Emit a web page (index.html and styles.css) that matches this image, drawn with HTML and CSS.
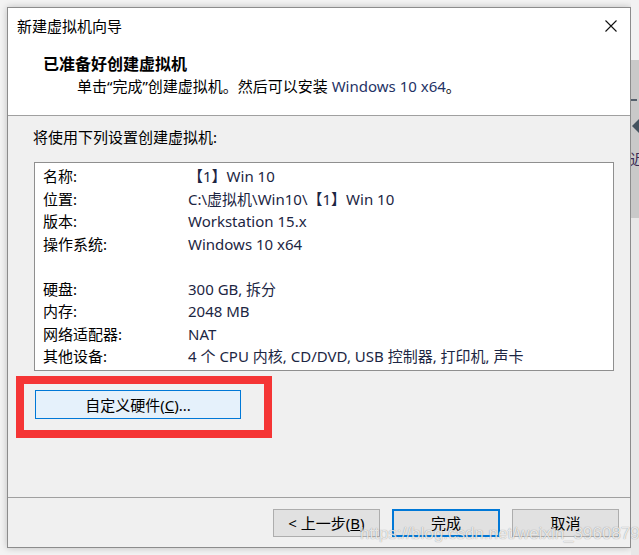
FILE: index.html
```html
<!DOCTYPE html>
<html lang="zh-CN">
<head>
<meta charset="utf-8">
<title>新建虚拟机向导</title>
<link rel="stylesheet" href="styles.css">
</head>
<body>
<div class="screen">
  <div class="window">
    <div class="top">
      <div class="titlebar">
        <span class="title">新建虚拟机向导</span>
        <svg class="close" width="12" height="12" viewBox="0 0 12 12"><path d="M0.5 0.5 L11.5 11.5 M11.5 0.5 L0.5 11.5" stroke="#111" stroke-width="1.1" fill="none"/></svg>
      </div>
      <div class="header">
        <div class="heading">已准备好创建虚拟机</div>
        <div class="subtitle">单击“完成”创建虚拟机。然后可以安装 <span class="latin">Windows 10 x64</span>。</div>
      </div>
    </div>
    <div class="content">
      <div class="intro">将使用下列设置创建虚拟机:</div>
      <div class="summary">
        <div class="row"><span class="label">名称:</span><span class="value">【1】Win 10</span></div>
        <div class="row"><span class="label">位置:</span><span class="value">C:\虚拟机\Win10\【1】Win 10</span></div>
        <div class="row"><span class="label">版本:</span><span class="value">Workstation 15.x</span></div>
        <div class="row"><span class="label">操作系统:</span><span class="value">Windows 10 x64</span></div>
        <div class="row"></div>
        <div class="row"><span class="label">硬盘:</span><span class="value">300 GB, 拆分</span></div>
        <div class="row"><span class="label">内存:</span><span class="value">2048 MB</span></div>
        <div class="row"><span class="label">网络适配器:</span><span class="value">NAT</span></div>
        <div class="row"><span class="label">其他设备:</span><span class="value">4 个 CPU 内核, CD/DVD, USB 控制器, 打印机, 声卡</span></div>
      </div>
      <div class="custom-wrap">
        <button class="custom">自定义硬件(<u>C</u>)...</button>
        <span class="annot"></span>
      </div>
    </div>
    <div class="footer">
      <button class="btn">&lt; 上一步(<u>B</u>)</button>
      <button class="btn primary">完成</button>
      <button class="btn">取消</button>
    </div>
  </div>
  <div class="desk-strip">
    <div class="desk-light"></div>
    <div class="desk-gray">
      <span class="dash"></span>
      <span class="arrow"></span>
      <span class="glyph">近</span>
    </div>
    <div class="desk-rest"></div>
  </div>
  <div class="watermark">https://blog.csdn.net/weixin_39608791</div>
</div>
</body>
</html>
```
FILE: styles.css
```css
* { box-sizing: border-box; }
html, body {
  margin: 0;
  padding: 0;
  width: 639px;
  height: 555px;
  overflow: hidden;
  background: #f3f3f3;
  font-family: "Noto Sans", "Noto Sans CJK SC", sans-serif;
  font-size: 15px;
  color: #000;
}
.screen {
  position: relative;
  display: flex;
  width: 639px;
  height: 555px;
}
.window {
  margin: 7px 0 0 7px;
  width: 624px;
  height: 541px;
  border: 1px solid #8c8c8c;
  background: #f0f0f0;
  box-shadow: 0 0 7px rgba(0,0,0,0.22);
  display: flex;
  flex-direction: column;
  flex-shrink: 0;
}
.top {
  background: #fff;
  height: 108px;
  border-bottom: 1px solid #a0a0a0;
}
.titlebar {
  height: 35px;
  display: flex;
  align-items: center;
  justify-content: space-between;
  padding: 0 13px 0 9px;
}
.title { line-height: 20px; }
.close { display: block; margin-top: 0; }
.header { padding: 10px 0 0 35px; }
.heading {
  font-weight: bold;
  font-size: 16px;
  line-height: 22px;
}
.subtitle {
  padding-left: 34px;
  line-height: 23px;
}
.latin { color: #1f3366; }
.content {
  flex: 1;
  padding: 10px 0 0 25px;
}
.intro { line-height: 22px; }
.summary {
  margin: 14px 0 0 1px;
  width: 580px;
  height: 209px;
  border: 1px solid #8f8f8f;
  background: #fff;
  padding: 2px 0 0 8px;
}
.row {
  display: flex;
  height: 22.5px;
  line-height: 22.5px;
  white-space: nowrap;
}
.label { width: 145px; flex-shrink: 0; }
.value { color: #1c2643; }
.custom-wrap {
  position: relative;
  margin: 19px 0 0 2px;
  width: 206px;
  height: 29px;
}
.custom {
  display: block;
  width: 206px;
  height: 29px;
  margin: 0;
  padding: 0;
  border: 1px solid #0078d7;
  background: #e5f1fb;
  font: inherit;
  color: #000;
  line-height: 26px;
}
.annot {
  position: absolute;
  left: -19px;
  top: -14px;
  width: 256px;
  height: 62px;
  border: 8px solid #f53535;
}
.footer {
  border-top: 1px solid #a0a0a0;
  padding: 11px 11px 10px 0;
  display: flex;
  justify-content: flex-end;
  gap: 12px;
}
.btn {
  width: 107px;
  height: 28px;
  margin: 0;
  padding: 0;
  border: 1px solid #adadad;
  background: #e1e1e1;
  font: inherit;
  color: #000;
  line-height: 24px;
}
.btn.primary {
  width: 108px;
  border: 2px solid #0078d7;
}
.desk-strip {
  width: 8px;
  display: flex;
  flex-direction: column;
  overflow: hidden;
  flex-shrink: 0;
}
.desk-light { height: 60px; background: #f2f2f2; }
.desk-gray {
  height: 158px;
  background: #c9c9c9;
  display: flex;
  flex-direction: column;
  padding-top: 39px;
}
.dash {
  display: block;
  width: 6px;
  height: 2px;
  background: #55606c;
}
.arrow {
  display: block;
  margin: 18px 0 0 1px;
  width: 0;
  height: 0;
  border-top: 7px solid transparent;
  border-bottom: 7px solid transparent;
  border-right: 7px solid #44535f;
}
.glyph {
  display: block;
  margin: 16px 0 0 -1px;
  font-size: 15px;
  line-height: 20px;
  color: #3a2c55;
  white-space: nowrap;
}
.desk-rest { flex: 1; background: #e8e8e8; }
.watermark {
  position: absolute;
  left: 360px;
  top: 524px;
  font-family: "Liberation Sans", Arial, sans-serif;
  font-size: 17px;
  line-height: 20px;
  color: rgba(255,255,255,0.8);
  text-shadow: 0 0 1px rgba(0,0,0,0.45);
  white-space: nowrap;
}
```
